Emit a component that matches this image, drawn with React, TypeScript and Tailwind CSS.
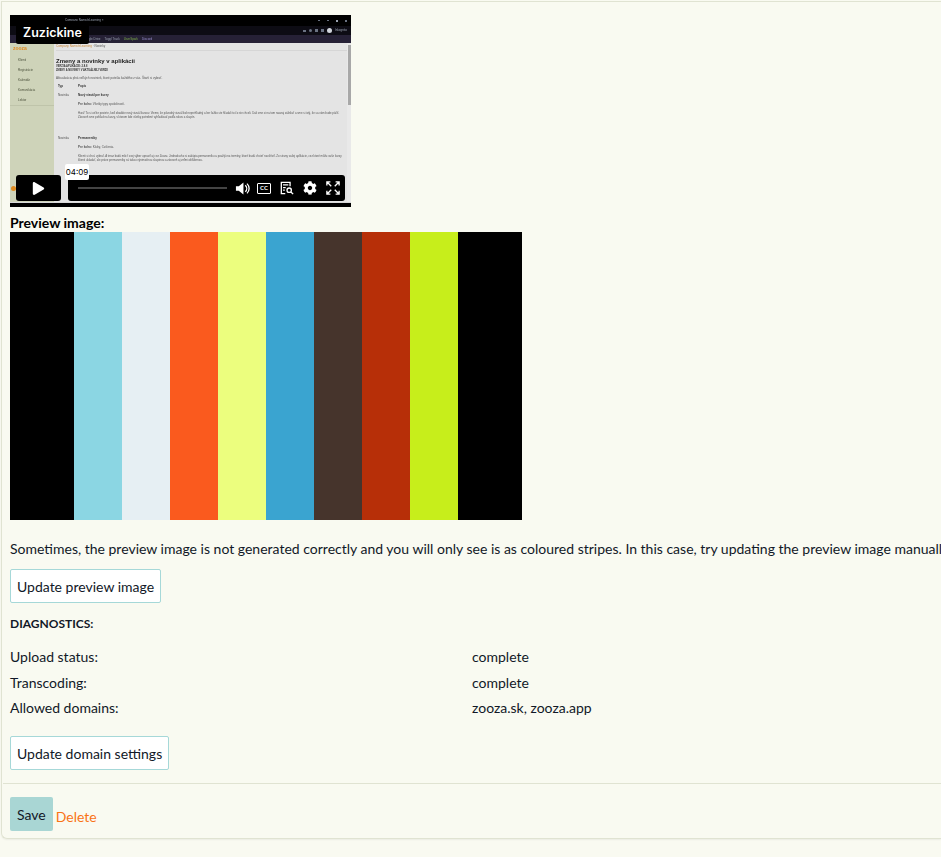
import React from "react";
import { FaCog, FaPlay } from "react-icons/fa";

const STRIPES = [
  "w-[64px] bg-black",
  "w-[48px] bg-[#8bd6e3]",
  "w-[48px] bg-[#e6eff3]",
  "w-[48px] bg-[#fa5a1e]",
  "w-[48px] bg-[#ecfe7e]",
  "w-[48px] bg-[#3aa4d0]",
  "w-[48px] bg-[#46342c]",
  "w-[48px] bg-[#b72f08]",
  "w-[48px] bg-[#c7ee1b]",
  "w-[64px] bg-black",
];

const DIAGNOSTICS = [
  { label: "Upload status:", value: "complete", cls: "h-[26px]" },
  { label: "Transcoding:", value: "complete", cls: "h-[25px]" },
  { label: "Allowed domains:", value: "zooza.sk, zooza.app", cls: "h-[26px]" },
];

const SIDE_ITEMS = ["Klienti", "Registrácie", "Kalendár", "Komunikácia", "Lektor"];

// the frame of the recorded screen inside the video
const VideoFrame = () => (
  <div className="flex h-full w-full flex-col bg-black font-['Liberation_Sans',sans-serif] blur-[0.35px]">
    <div className="flex h-[11px] items-center justify-end gap-[7px] bg-black pr-[4px]">
      <span className="mr-auto ml-[55px] text-[3px] text-gray-400">Company Name/eLearning ×</span>
      <span className="h-[1px] w-[2px] bg-gray-500" />
      <span className="h-[1px] w-[2px] bg-gray-500" />
      <span className="h-[2px] w-[2px] bg-gray-400" />
      <span className="h-[2px] w-[2px] bg-gray-500" />
    </div>
    <div className="flex h-[9px] items-center justify-end gap-[3px] bg-[#0d0c14] pr-[4px]">
      <span className="h-[2px] w-[3px] bg-gray-500" />
      <span className="h-[3px] w-[3px] rounded-full bg-gray-500" />
      <span className="h-[3px] w-[3px] bg-gray-500" />
      <span className="h-[3px] w-[3px] bg-gray-500" />
      <span className="h-[5px] w-[5px] rounded-full bg-gray-300" />
      <span className="text-[3px] text-gray-400">Inkognito</span>
    </div>
    <div className="flex h-[8px] items-center gap-[4px] bg-[#262136] pl-[73px] text-[3px] text-gray-400">
      <span>Google Drive</span>
      <span>Toggl Track</span>
      <span className="text-[#7fb04a]">UserSpark</span>
      <span className="text-[#9a8fd0]">Discord</span>
    </div>
    <div className="flex min-h-0 flex-1">
      <div className="flex w-[44px] shrink-0 flex-col bg-[#ced3b9] text-[3px] text-[#4a4f3a]">
        <div className="h-[12px] pt-[2px] pl-[3px] text-[5px] font-bold text-[#e08a1e]">zooza</div>
        {SIDE_ITEMS.map((item, i) => (
          <div key={item} className={i === 1 ? "h-[10px] pl-[8px] leading-[10px]" : "h-[10px] pl-[8px] leading-[10px]"}>
            {item}
          </div>
        ))}
        <div className="h-px bg-[#bfc4aa]" />
      </div>
      <div className="min-w-0 flex-1 overflow-hidden bg-[#e4e4e4] pl-[2px] text-[3px] leading-[4.4px] text-[#555]">
        <div className="h-[8px] border-b border-[#d6d6d6] pl-[0px] leading-[7px] text-[#c98a3c]">
          Company Name/eLearning <span className="text-[#555]">· Novinky</span>
        </div>
        <div className="mt-[6px] text-[6px] leading-[8px] font-bold text-[#222]">Zmeny a novinky v aplikácii</div>
        <div className="text-[2.6px] leading-[4px] font-bold text-[#333]">VERZIA APLIKÁCIE: 2.8.8</div>
        <div className="text-[2.6px] leading-[4px] font-bold text-[#333]">ZMENY A NOVINKY V AKTUÁLNEJ VERZII</div>
        <div className="mt-[3px] h-[8px]">Aktualizácia plná veľkých noviniek, ktoré potešia každého z vás. Štartí si vybrať.</div>
        <div className="flex h-[9px] font-bold text-[#333]">
          <span className="w-[22px] pl-[2px]">Typ</span>
          <span>Popis</span>
        </div>
        <div className="flex">
          <span className="w-[22px] shrink-0 pl-[2px]">Novinka</span>
          <div className="min-w-0 flex-1 pr-[2px]">
            <div className="h-[9px] font-bold text-[#333]">Nový vizuál pre kurzy</div>
            <div className="h-[9px]"><b>Pre koho:</b> Všetky typy spoločností.</div>
            <div className="h-[25px] text-[2.8px] leading-[4.4px]">
              Hurá! To si určite poviete, keď zbadáte nový vizuál kurzov. Vieme, že pôvodný vizuál bol neprehľadný a len ťažko ste hľadali to čo ste chceli. Dali sme si na tom naozaj záležať a sme si istý, že sa vám bude páčiť. Zároveň sme pohľad na kurzy, v ktorom kde všetky potrebné vyhľadávať podľa rokov a skupín.
            </div>
          </div>
        </div>
        <div className="flex">
          <span className="w-[22px] shrink-0 pl-[2px]">Novinka</span>
          <div className="min-w-0 flex-1 pr-[2px]">
            <div className="h-[9px] font-bold text-[#333]">Permanentky</div>
            <div className="h-[9px]"><b>Pre koho:</b> Kluby, Cvičenia.</div>
            <div className="text-[2.8px] leading-[4.4px]">
              Klienti si chcú vybrať. A teraz budú môcť svoj výber upraviť aj cez Zoozu. Jednoducho si zakúpia permanentku a použijú na termíny, ktoré budú chcieť navštíviť. Zo strany vašej aplikácie, cez ktoré môžu vaše kurzy klienti ukladať, ale práve permanentky sú takou výnimočnou skupinou a zároveň aj veľmi obľúbenou.
            </div>
          </div>
        </div>
      </div>
      <div className="w-[4px] shrink-0 bg-[#e9e9e9] pt-[2px]">
        <div className="mx-auto h-[60px] w-[3px] bg-[#a8a8a8]" />
      </div>
    </div>
    <div className="h-[5px] shrink-0 bg-black" />
  </div>
);

const Player = () => (
  <div className="relative h-[192px] w-[341px] overflow-hidden">
    <VideoFrame />
    <div className="absolute top-[6px] left-[6px] rounded-[2px] bg-black px-[7px] py-[4px] font-['Inter',sans-serif] text-[12.5px] leading-[15px] font-semibold text-white">
      Zuzickine
    </div>
    <span className="absolute top-[171px] left-[1px] h-[5px] w-[5px] rounded-full bg-[#e08a1e]" />
    <div className="absolute top-[160px] left-[6px] flex h-[26px] w-[45px] items-center justify-center rounded-[3px] bg-black">
      <FaPlay className="h-[13px] w-[13px] text-white" />
    </div>
    <div className="absolute top-[160px] left-[58px] flex h-[26px] w-[277px] items-center rounded-[3px] bg-black pr-[5px] pl-[10px]">
      <div className="h-[2px] w-[149px] bg-[#444]" />
      <svg viewBox="0 0 16 16" className="ml-[8px] h-[15px] w-[15px] fill-white">
        <path d="M1 5.5h3L9 1.5v13l-5-4H1z" />
        <path d="M11 4.5c2 2 2 5 0 7M12.8 2.8c3 3 3 7.400 0 10.400" fill="none" stroke="white" strokeWidth="1.4" />
      </svg>
      <div className="ml-[7px] flex h-[11px] w-[14px] items-center justify-center rounded-[1px] border border-white text-[6px] leading-none font-bold text-white">
        CC
      </div>
      <svg viewBox="0 0 16 16" className="ml-[9px] h-[14px] w-[14px]">
        <path d="M6 14.500H1.500v-13h10V6" fill="none" stroke="white" strokeWidth="1.500" />
        <path d="M3.500 4.500h6M3.500 7.500h3M3.500 10.500h2" stroke="white" strokeWidth="1.300" />
        <circle cx="10.500" cy="10.500" r="2.500" fill="none" stroke="white" strokeWidth="1.500" />
        <path d="M12.500 12.500l2.500 2.500" stroke="white" strokeWidth="1.600" />
      </svg>
      <FaCog className="ml-[9px] h-[14px] w-[14px] text-white" />
      <svg viewBox="0 0 16 16" className="ml-[9px] h-[14px] w-[14px]" fill="none" stroke="white" strokeWidth="1.500">
        <path d="M1 5V1h4M11 1h4v4M15 11v4h-4M5 15H1v-4M1.500 1.500L6 6M14.500 1.500L10 6M14.500 14.500L10 10M1.500 14.500L6 10" />
      </svg>
    </div>
    <div className="absolute top-[149px] left-[55px] flex h-[16px] w-[24px] items-center justify-center rounded-[2px] bg-white font-['Inter',sans-serif] text-[8px] text-black">
      04:09
    </div>
    <div className="absolute top-[187px] left-0 h-px w-full bg-[#d8d8d8]" />
  </div>
);

const OutlineButton = ({ children }: { children: React.ReactNode }) => (
  <button type="button" className="block h-[34px] rounded-[2px] border border-[#a6d8d8] bg-white px-[6px] text-[14px] text-[#111827]">
    {children}
  </button>
);

export default function App() {
  return (
    <div className="h-[857px] w-[941px] overflow-hidden bg-[#f9faf1] pt-px pl-px font-['Lato',sans-serif] text-[14px] text-[#111827]">
      <div className="h-[838px] rounded-bl-[6px] border-t border-b border-l border-[#e0e3d2] pl-px shadow-[0_1px_2px_rgba(0,0,0,0.06)]">
        <div className="pt-[13px] pl-[7px]">
          <Player />
          <h3 className="mt-[7px] h-[18px] text-[14px] leading-[18px] font-bold text-black">Preview image:</h3>
          <div className="flex h-[288px] w-[512px]">
            {STRIPES.map((cls, i) => (
              <div key={i} className={cls} />
            ))}
          </div>
          <p className="mt-[19px] h-[21px] leading-[20px] whitespace-nowrap">
            Sometimes, the preview image is not generated correctly and you will only see is as coloured stripes. In this case, try updating the preview image manually.
          </p>
          <div className="mt-[9px]">
            <OutlineButton>Update preview image</OutlineButton>
          </div>
          <h4 className="mt-[13px] h-[16px] text-[12px] leading-[16px] font-bold text-[#111827]">DIAGNOSTICS:</h4>
          <div className="mt-[14px] w-[924px]">
            {DIAGNOSTICS.map((row) => (
              <div key={row.label} className={`grid grid-cols-2 ${row.cls}`}>
                <span>{row.label}</span>
                <span>{row.value}</span>
              </div>
            ))}
          </div>
          <div className="mt-[13px]">
            <OutlineButton>Update domain settings</OutlineButton>
          </div>
        </div>
        <div className="mt-[13px] flex h-[55px] items-start gap-[3px] border-t border-[#e0e3d2] pt-[13px] pl-[7px]">
          <button type="button" className="h-[34px] rounded-[2px] bg-[#a9d6d4] px-[7px] text-[14px]">Save</button>
          <a className="mt-[9px] text-[14px] text-[#f97316]">Delete</a>
        </div>
      </div>
    </div>
  );
}
